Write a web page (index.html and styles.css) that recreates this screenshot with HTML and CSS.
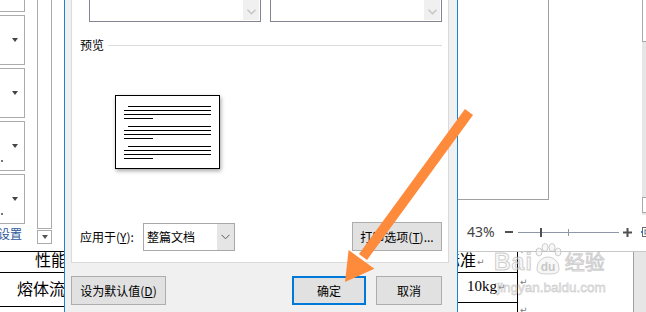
FILE: index.html
```html
<!DOCTYPE html>
<html lang="zh-CN">
<head>
<meta charset="utf-8">
<title>页面设置</title>
<link rel="stylesheet" href="styles.css">
</head>
<body>
<div class="screen">
  <div class="left">
    <div class="lpane">
      <div class="gallery">
        <div class="gbox"><span class="nodot"></span><span class="tri"></span></div>
        <div class="gbox"><span class="nodot"></span><span class="tri"></span></div>
        <div class="gbox"><span class="nodot"></span><span class="tri"></span></div>
        <div class="gbox"><span class="dot"></span><span class="tri"></span></div>
        <div class="gbox"><span class="dot"></span><span class="tri"></span></div>
        <div class="setlink">设置</div>
      </div>
      <div class="vscroll">
        <div class="track"></div>
        <div class="sdown"><span class="tri"></span></div>
      </div>
    </div>
    <div class="ldoc">
      <div class="lrow1">性能指标</div>
      <div class="lrow2">熔体流动</div>
    </div>
  </div>

  <div class="dialog">
    <div class="panel">
      <div class="lists">
        <div class="listbox"><div class="sbtn"><svg width="9" height="6" viewBox="0 0 9 6"><polyline points="0.5,0.8 4.5,4.8 8.5,0.8" fill="none" stroke="#c4c4c4" stroke-width="1.4"/></svg></div></div>
        <div class="listbox"><div class="sbtn"><svg width="9" height="6" viewBox="0 0 9 6"><polyline points="0.5,0.8 4.5,4.8 8.5,0.8" fill="none" stroke="#c4c4c4" stroke-width="1.4"/></svg></div></div>
      </div>
      <div class="prevhead"><span>预览</span><span class="rule"></span></div>
      <div class="page">
        <div class="para"><div class="ln first"></div><div class="ln"></div><div class="ln"></div><div class="ln short"></div></div>
        <div class="para"><div class="ln first"></div><div class="ln"></div><div class="ln"></div><div class="ln short"></div></div>
        <div class="para"><div class="ln first"></div><div class="ln"></div><div class="ln"></div><div class="ln short"></div></div>
      </div>
      <div class="apply">
        <span class="alabel">应用于(<u>Y</u>):</span>
        <div class="combo"><span class="val">整篇文档</span><span class="dd"><svg width="9" height="6" viewBox="0 0 9 6"><polyline points="0.5,0.8 4.5,4.8 8.5,0.8" fill="none" stroke="#5a5a5a" stroke-width="1"/></svg></span></div>
        <div class="btn popt">打印选项(<u>T</u>)...</div>
      </div>
    </div>
    <div class="footer">
      <div class="btn bdef">设为默认值(<u>D</u>)</div>
      <div class="btn primary bok">确定</div>
      <div class="btn bcancel">取消</div>
    </div>
  </div>

  <div class="right">
    <div class="rtop">
      <div class="rmain"><div class="pageout"></div></div>
      <div class="vstrip"><div class="thumb1"></div><div class="thumb2"></div></div>
    </div>
    <div class="zoombar">
      <span class="pct">43%</span>
      <span class="minus"></span>
      <div class="slider"><span class="sthumb"></span><span class="stick"></span></div>
      <svg class="plus" width="9" height="9" viewBox="0 0 9 9"><rect x="0" y="3.5" width="9" height="2" fill="#505050"/><rect x="3.5" y="0" width="2" height="9" fill="#505050"/></svg>
      <svg class="fit" width="12" height="12" viewBox="0 0 12 12"><rect x="1.5" y="1.5" width="10" height="9" fill="#fff" stroke="#6a6a6a"/><rect x="0" y="5" width="2" height="2" fill="#2b7cd3"/><rect x="4" y="4" width="5" height="4" fill="none" stroke="#6a6a6a"/></svg>
    </div>
    <div class="rdoc">
      <div class="tcol">
        <div class="trow1">标准<span class="pm">↵</span></div>
        <div class="trow2">10kg<span class="pm">↵</span></div>
      </div>
      <div class="tcol2">
        <span class="pm m1">↵</span>
        <span class="pm m2">↵</span>
        <span class="pm m3">↵</span>
      </div>
      <div class="rgrey"></div>
    </div>
  </div>
</div>

<div class="watermark">
  <div class="wm1">
    <span class="bai">Bai</span>
    <svg class="paw" width="30" height="32" viewBox="0 0 30 32"><g fill="rgba(240,240,240,0.55)" stroke="rgba(150,150,150,0.45)" stroke-width="1"><ellipse cx="6" cy="9" rx="3" ry="4"/><ellipse cx="12" cy="4.5" rx="3" ry="4"/><ellipse cx="19" cy="4.5" rx="3" ry="4"/><ellipse cx="25" cy="9" rx="3" ry="4"/><path d="M4 26 C4 18 10 14 15 14 C20 14 26 18 26 26 C26 30 22 31 15 31 C8 31 4 30 4 26 Z"/></g><text x="15" y="28" text-anchor="middle" font-family="Liberation Sans" font-weight="bold" font-size="12" fill="rgba(150,150,150,0.5)">du</text></svg>
    <span class="jy">经验</span>
  </div>
  <div class="wm2">jingyan.baidu.com</div>
</div>

<svg class="arrow" width="646" height="312" viewBox="0 0 646 312">
  <line x1="469" y1="112" x2="363" y2="257" stroke="#fe8a3c" stroke-width="10"/>
  <polygon points="345,282 348.6,250 374.4,268.8" fill="#fe8a3c"/>
</svg>
</body>
</html>
```

FILE: styles.css
```css
* { box-sizing: border-box; margin: 0; padding: 0; }
html, body { width: 646px; height: 312px; overflow: hidden; background: #fff; }
body {
  position: relative;
  font-family: "Noto Sans CJK SC", "Microsoft YaHei", sans-serif;
  font-size: 12px;
  color: #000;
}
.screen { display: flex; width: 646px; height: 312px; }

/* ---------- left: styles pane + document ---------- */
.left { width: 64px; flex: none; display: flex; flex-direction: column; overflow: hidden; background: #fff; }
.lpane { height: 251px; flex: none; display: flex; }
.gallery { width: 35px; flex: none; margin-left: -10px; margin-top: -38px; display: flex; flex-direction: column; gap: 3px; }
.gbox {
  height: 50px; flex: none; border: 1px solid #ababab;
  display: flex; justify-content: space-between; align-items: center; padding-right: 6px;
}
.tri { width: 0; height: 0; border-left: 3px solid transparent; border-right: 3px solid transparent; border-top: 4px solid #444; }
.nodot { width: 2px; }
.dot { width: 2px; height: 2px; background: #777; margin-left: 10px; align-self: flex-end; margin-bottom: 8px; }
.setlink { text-align: right; padding-right: 3px; line-height: 14px; color: #2b579a; white-space: nowrap; }
.vscroll { width: 15px; flex: none; margin-left: 12px; display: flex; flex-direction: column; }
.track { height: 229px; border: 1px solid #ababab; border-top: none; background: #fff; }
.sdown { height: 14px; margin-top: 1px; border: 1px solid #ababab; display: flex; align-items: center; justify-content: center; }
.sdown .tri { border-top-color: #555; }

.ldoc { flex: 1; border-top: 1px solid #000; font-size: 16px; white-space: nowrap; }
.lrow1 { height: 21px; border-bottom: 1px solid #000; padding-left: 35px; line-height: 14px; overflow: hidden; }
.lrow2 { height: 34px; border-bottom: 1px solid #000; padding: 5px 0 0 17px; line-height: 20px; overflow: hidden; }

/* ---------- dialog ---------- */
.dialog {
  width: 394px; flex: none; display: flex; flex-direction: column;
  background: #f0f0f0; border-left: 1px solid #1883d7; border-right: 1px solid #1883d7;
  padding: 0 8px 0 6px;
}
.panel { height: 263px; flex: none; background: #fff; border: 1px solid #dadada; border-top: none; display: flex; flex-direction: column; }
.lists { display: flex; gap: 9px; padding-left: 17px; height: 22px; flex: none; }
.listbox { width: 172px; height: 22px; border: 1px solid #82858f; border-top: none; display: flex; justify-content: flex-end; padding: 0 1px 1px 0; }
.sbtn { width: 16px; height: 20px; background: #f0f0f0; display: flex; align-items: center; justify-content: center; padding-top: 3px; }

.prevhead { margin-top: 15px; height: 16px; flex: none; display: flex; align-items: center; padding: 0 6px 0 8px; line-height: 16px; }
.prevhead .rule { flex: 1; height: 1px; background: #dcdcdc; margin-left: 4px; }

.page {
  margin: 42px 0 0 43px; width: 105px; height: 74px; flex: none;
  border: 1px solid #000; background: #fff;
  box-shadow: 1px 2px 4px rgba(0, 0, 0, 0.35);
  padding: 10px 8px 0 8px; display: flex; flex-direction: column; gap: 7px;
}
.para { display: flex; flex-direction: column; gap: 3px; }
.ln { height: 1px; background: #000; }
.ln.first { margin-left: 4px; }
.ln.short { width: 29px; }

.apply { margin-top: 53px; height: 29px; flex: none; display: flex; align-items: flex-start; padding: 0 6px 0 8px; }
.alabel { width: 63px; flex: none; line-height: 29px; white-space: nowrap; }
.combo { margin-top: 1px; width: 92px; height: 28px; border: 1px solid #a8a8a8; display: flex; background: #fff; }
.combo .val { flex: 1; padding-left: 3px; line-height: 26px; }
.combo .dd { width: 17px; background: #e5e5e5; display: flex; align-items: center; justify-content: center; }

.btn {
  height: 29px; background: #e1e1e1; border: 1px solid #adadad;
  display: flex; align-items: center; justify-content: center; white-space: nowrap;
}
.btn.primary { border: 2px solid #0078d7; }
.popt { margin-left: auto; width: 90px; }

.footer { display: flex; padding-top: 13px; }
.bdef { width: 95px; }
.bok { margin-left: auto; width: 74px; }
.bcancel { width: 66px; margin-left: 10px; margin-right: 7px; }

/* ---------- right ---------- */
.right { width: 188px; flex: none; display: flex; flex-direction: column; overflow: hidden; }
.rtop { height: 215px; flex: none; display: flex; }
.rmain { width: 184px; background: #fff; }
.pageout { width: 91px; height: 200px; border-right: 1px solid #a0a0a0; border-bottom: 1px solid #a0a0a0; }
.vstrip { width: 4px; background: #e6e6e6; display: flex; flex-direction: column; }
.thumb1 { height: 42px; background: #fff; border-left: 1px solid #a8a8a8; border-bottom: 1px solid #a8a8a8; }
.thumb2 { margin-top: 155px; height: 16px; background: #fff; border: 1px solid #a8a8a8; border-right: none; }

.zoombar { height: 36px; flex: none; display: flex; align-items: center; padding: 0 0 2px 9px; background: #fff; }
.pct { font-family: "Noto Sans", sans-serif; font-size: 14px; color: #444; width: 27px; white-space: nowrap; line-height: 16px; }
.minus { width: 8px; height: 2px; background: #505050; margin-left: 11px; flex: none; }
.slider {
  position: relative; width: 101px; height: 13px; margin-left: 5px; flex: none;
  background: linear-gradient(#8d97a8, #8d97a8) 0 6px / 100% 1px no-repeat;
}
.sthumb { position: absolute; left: 22px; top: 2px; width: 2px; height: 9px; background: #505050; }
.stick { position: absolute; left: 50px; top: 3px; width: 1px; height: 7px; background: #8d97a8; }
.plus { margin-left: 4px; flex: none; }
.fit { margin-left: 9px; flex: none; }

.rdoc { flex: 1; border-top: 1px solid #c8c8c8; display: flex; background: #fff; }
.tcol { width: 60px; flex: none; border-right: 1px solid #000; overflow: hidden; white-space: nowrap; }
.trow1 { height: 21px; border-bottom: 1px solid #000; font-size: 16px; line-height: 14px; text-indent: -14px; overflow: hidden; }
.trow2 { height: 30px; border-bottom: 1px solid #000; font-family: "Liberation Serif", serif; font-size: 15px; line-height: 20px; padding: 3px 0 0 9px; }
.pm { font-family: "DejaVu Sans", sans-serif; font-size: 9px; color: #7a7a7a; line-height: 10px; vertical-align: 1px; margin-left: 1px; }
.tcol2 { width: 115px; flex: none; display: flex; flex-direction: column; align-items: flex-start; padding-left: 2px; overflow: hidden; }
.tcol2 .pm { display: block; margin-left: 0; }
.m1 { margin-top: -6px; }
.m2 { margin-top: 21px; }
.m3 { margin-top: 18px; }
.rgrey { width: 13px; flex: none; border-left: 1px solid #a0a0a0; background: #e6e6e6; }

/* ---------- overlays ---------- */
.watermark { position: absolute; left: 494px; top: 241px; pointer-events: none; }
.wm1 { display: flex; align-items: flex-end; height: 34px; }
.bai {
  font-family: "Liberation Sans", sans-serif; font-weight: bold; font-size: 23px; line-height: 24px; letter-spacing: 1px;
  color: rgba(240, 240, 240, 0.5); -webkit-text-stroke: 1px rgba(150, 150, 150, 0.45); margin-bottom: 1px;
}
.paw { margin-left: 0; }
.jy {
  font-size: 20px; line-height: 24px; margin-left: 2px; margin-bottom: 1px;
  color: rgba(240, 240, 240, 0.5); -webkit-text-stroke: 1px rgba(150, 150, 150, 0.45);
}
.wm2 {
  font-family: "Liberation Sans", sans-serif; font-size: 13.5px; line-height: 16px; margin: 5px 0 0 3px;
  color: rgba(240, 240, 240, 0.5); -webkit-text-stroke: 0.8px rgba(150, 150, 150, 0.4);
}
.arrow { position: absolute; left: 0; top: 0; pointer-events: none; }
```
